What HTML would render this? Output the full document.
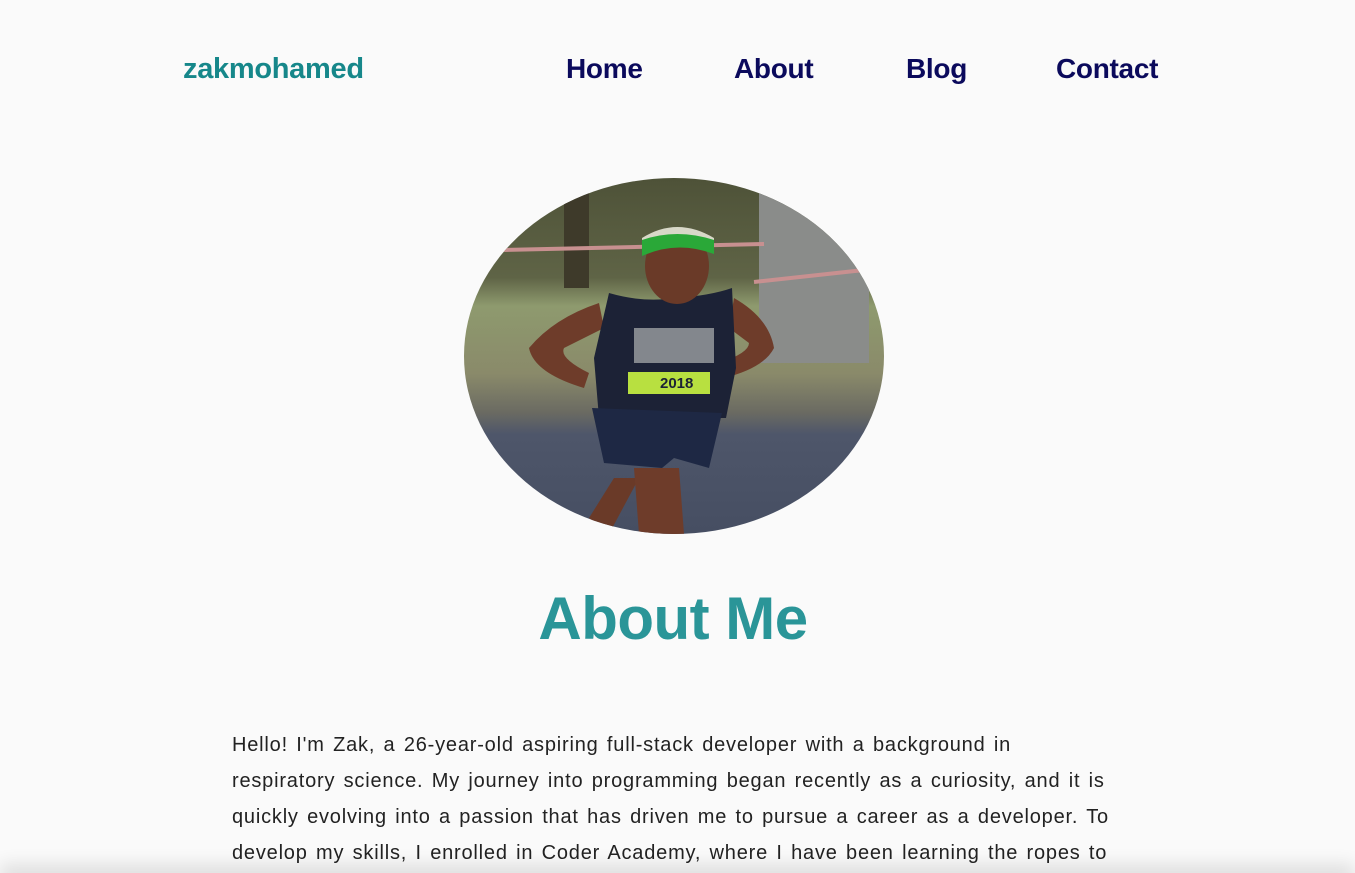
<!DOCTYPE html>
<html><head><meta charset="utf-8"><style>
html,body{margin:0;padding:0;background:#fafafa;width:1355px;height:873px;overflow:hidden;font-family:"Liberation Sans",sans-serif;position:relative}
.logo{position:absolute;left:183px;top:53px;font-size:29px;font-weight:bold;color:#16878a;letter-spacing:-0.3px}
.nav a{position:absolute;top:53px;font-size:28px;font-weight:bold;color:#0b0a5c;text-decoration:none;letter-spacing:-0.3px}
h1{position:absolute;left:0;width:1346px;top:584px;margin:0;text-align:center;font-size:60px;color:#2a9598;font-weight:bold;letter-spacing:-0.5px}
p{position:absolute;left:232px;top:727px;width:1000px;margin:0;font-size:20px;line-height:36px;color:#222;white-space:nowrap;letter-spacing:0.8px;word-spacing:2px}
.pic{position:absolute;left:464px;top:178px}
.shadow{position:absolute;left:0;right:0;top:873px;height:20px;box-shadow:0 -8px 18px rgba(0,0,0,0.12)}
</style></head><body>
<div class="logo">zakmohamed</div>
<div class="nav"><a style="left:566px">Home</a><a style="left:734px">About</a><a style="left:906px">Blog</a><a style="left:1056px">Contact</a></div>
<svg class="pic" width="420" height="356" viewBox="0 0 420 356">
<defs><clipPath id="c"><ellipse cx="210" cy="178" rx="210" ry="178"/></clipPath>
<linearGradient id="bg" x1="0" y1="0" x2="0" y2="1">
<stop offset="0" stop-color="#4e5238"/><stop offset="0.28" stop-color="#5f6446"/><stop offset="0.36" stop-color="#8e9a6e"/><stop offset="0.55" stop-color="#8a8a6a"/><stop offset="0.66" stop-color="#6a6a62"/><stop offset="0.72" stop-color="#4e566a"/><stop offset="1" stop-color="#464e62"/></linearGradient></defs>
<g clip-path="url(#c)">
<rect width="420" height="356" fill="url(#bg)"/>
<rect x="100" y="0" width="25" height="110" fill="#3e3a2a"/>
<rect x="295" y="10" width="110" height="175" fill="#8a8c8a"/>
<path d="M40 72 L300 66 M290 104 L400 92" stroke="#c89090" stroke-width="4"/>
<path d="M150 300 L125 340 L145 356 L175 300Z" fill="#6a3a28"/>
<path d="M170 290 L175 356 L220 356 L215 290Z" fill="#6e3c2a"/>
<path d="M135 125 Q90 140 65 170 Q70 195 120 210 L125 195 Q95 180 100 170 L140 150Z" fill="#6e3c2a"/>
<path d="M270 120 Q305 140 310 170 Q300 190 260 200 L255 185 Q285 175 285 165 L265 150Z" fill="#6e3c2a"/>
<path d="M145 115 Q180 125 210 120 Q245 118 268 110 L272 190 L262 240 L135 240 L130 180Z" fill="#1c2236"/>
<path d="M128 230 L258 235 L245 290 L210 280 L198 290 L140 285Z" fill="#1e2844"/>
<rect x="164" y="194" width="82" height="22" fill="#b8e040"/>
<text x="196" y="210" font-size="15" font-weight="bold" fill="#1c2236" font-family="Liberation Sans">2018</text>
<path d="M170 150 L250 150 L250 185 L170 185Z" fill="#c8ccc8" opacity="0.6"/>
<ellipse cx="213" cy="88" rx="32" ry="38" fill="#6a3a28"/>
<path d="M178 72 Q213 52 250 72 L250 60 Q213 38 178 60Z" fill="#d8d8c8"/>
<path d="M178 62 Q213 50 250 62 L250 76 Q213 62 178 78Z" fill="#2aa838"/>
</g></svg>
<h1>About Me</h1>
<p>Hello! I'm Zak, a 26-year-old aspiring full-stack developer with a background in<br>respiratory science. My journey into programming began recently as a curiosity, and it is<br>quickly evolving into a passion that has driven me to pursue a career as a developer. To<br>develop my skills, I enrolled in Coder Academy, where I have been learning the ropes to</p>
<div class="shadow"></div>
</body></html>
